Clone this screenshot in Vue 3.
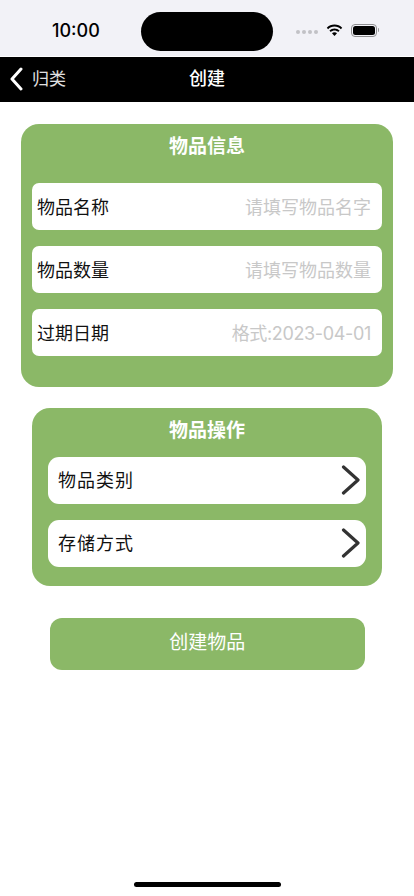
<script setup>
const fields = [
  { label: '物品名称', hint: '请填写物品名字' },
  { label: '物品数量', hint: '请填写物品数量' },
  { label: '过期日期', hint: '格式:2023-04-01', tight: true },
]
const ops = ['物品类别', '存储方式']
</script>

<template>
  <div class="page">
    <div class="status">
      <span class="time">10:00</span>
      <div class="island"></div>
      <div class="status-right">
        <div class="dots"><i></i><i></i><i></i><i></i></div>
        <svg class="wifi" width="17" height="13" viewBox="0 0 17 13">
          <path d="M8.5 2.6c2.5 0 4.7 1 6.4 2.6l1.3-1.4C14.2 1.8 11.5.6 8.5.6S2.8 1.8.8 3.8l1.3 1.4C3.8 3.6 6 2.6 8.5 2.6z" fill="#000"/>
          <path d="M8.5 6.4c1.4 0 2.7.5 3.7 1.5l1.4-1.4C12.2 5.200 10.400 4.400 8.500 4.400S4.800 5.200 3.400 6.500l1.400 1.400c1-1 2.300-1.500 3.700-1.500z" fill="#000"/>
          <path d="M8.500 8.300c-1 0-1.900.4-2.500 1l2.500 2.700 2.500-2.700c-.6-.6-1.500-1-2.500-1z" fill="#000"/>
        </svg>
        <div class="battery"><div class="battery-fill"></div></div>
        <div class="battery-cap"></div>
      </div>
    </div>

    <div class="nav">
      <div class="back">
        <svg width="14" height="24" viewBox="0 0 14 24">
          <path d="M12 2 L3 12 L12 22" fill="none" stroke="#fff" stroke-width="3" stroke-linecap="round" stroke-linejoin="round"/>
        </svg>
        <span>归类</span>
      </div>
      <div class="nav-title">创建</div>
    </div>

    <section class="card info">
      <h2 class="card-title">物品信息</h2>
      <div class="fields">
        <div v-for="f in fields" :key="f.label" class="field">
          <span class="label">{{ f.label }}</span>
          <span class="hint" :class="{ tight: f.tight }">{{ f.hint }}</span>
        </div>
      </div>
    </section>

    <section class="card ops">
      <h2 class="card-title">物品操作</h2>
      <div class="op-list">
        <div v-for="o in ops" :key="o" class="op">
          <span class="op-label">{{ o }}</span>
          <svg width="20" height="30" viewBox="0 0 20 30">
            <path d="M2.500 2 L17 15 L2.500 28" fill="none" stroke="#333" stroke-width="3.200" stroke-linecap="round" stroke-linejoin="round"/>
          </svg>
        </div>
      </div>
    </section>

    <button class="create">创建物品</button>

    <div class="spacer"></div>
    <div class="home"></div>
  </div>
</template>

<style scoped>
.page {
  width: 414px;
  height: 896px;
  background: #fff;
  display: flex;
  flex-direction: column;
  overflow: hidden;
  font-family: Inter, "Noto Sans CJK SC", sans-serif;
}
.status {
  height: 56px;
  flex: none;
  background: #f2f2f7;
  position: relative;
  display: flex;
  align-items: center;
  box-sizing: border-box;
  padding: 5px 0 0 52px;
  justify-content: space-between;
}
.time {
  font-family: Inter, sans-serif;
  font-size: 18px;
  font-weight: 500;
  color: #000;
}
.island {
  position: absolute;
  left: 141px;
  top: 12px;
  width: 132px;
  height: 39px;
  border-radius: 20px;
  background: #000;
}
.status-right {
  display: flex;
  align-items: center;
  padding-right: 35px;
  margin-top: -1px;
}
.dots {
  display: flex;
  gap: 2px;
  margin-right: 8px;
  margin-top: 3px;
}
.dots i {
  width: 4px;
  height: 4px;
  border-radius: 50%;
  background: #c2c2c6;
}
.wifi {
  margin-right: 8px;
}
.battery {
  width: 26px;
  height: 13px;
  box-sizing: border-box;
  border: 1px solid #8e8e90;
  border-radius: 4px;
  padding: 1px;
}
.battery-fill {
  width: 100%;
  height: 100%;
  background: #000;
  border-radius: 2.500px;
}
.battery-cap {
  width: 1.500px;
  height: 4px;
  background: #9a9a9c;
  margin-left: 1px;
  border-radius: 0 1px 1px 0;
}
.nav {
  height: 45px;
  flex: none;
  margin-top: 1px;
  padding-bottom: 2px;
  box-sizing: border-box;
  background: #000;
  color: #fff;
  position: relative;
  display: flex;
  align-items: center;
  justify-content: center;
}
.back {
  position: absolute;
  left: 9px;
  top: 10px;
  display: flex;
  align-items: center;
  gap: 9px;
  font-size: 17px;
  line-height: 24px;
  color: #e0e0e0;
}
.nav-title {
  font-size: 18px;
  font-weight: 500;
  line-height: 24px;
}
.card {
  background: #8bb867;
  border-radius: 18px;
  box-sizing: border-box;
  flex: none;
}
.card-title {
  margin: 0;
  color: #fff;
  font-size: 19px;
  line-height: 28px;
  font-weight: 700;
  text-align: center;
}
.info {
  margin: 22px 21px 0;
  width: 372px;
  height: 262.700px;
  padding: 9px 11px 0;
}
.fields {
  margin-top: 22.300px;
  display: flex;
  flex-direction: column;
  gap: 15.800px;
}
.field {
  height: 47.200px;
  box-sizing: border-box;
  background: #fff;
  border-radius: 7px;
  padding: 0 11px 0 5px;
  display: flex;
  align-items: center;
  justify-content: space-between;
}
.label {
  font-size: 18px;
  line-height: 24px;
  margin-top: 2px;
  color: #111;
}
.op-label {
  font-size: 18px;
  line-height: 24px;
  margin-top: 2px;
  color: #111;
  letter-spacing: 1px;
}
.hint {
  font-size: 18px;
  line-height: 24px;
  margin-top: 2px;
  color: #c8c8c8;
}
.tight {
  letter-spacing: -0.350px;
}
.ops {
  margin: 21px 32px 0;
  width: 350px;
  height: 178.300px;
  padding: 9px 16px 0;
}
.op-list {
  margin-top: 12px;
  display: flex;
  flex-direction: column;
  gap: 16px;
}
.op {
  height: 47.200px;
  background: #fff;
  border-radius: 11px;
  padding: 0 5px 0 10px;
  display: flex;
  align-items: center;
  justify-content: space-between;
}
.create {
  flex: none;
  margin: 32px 49px 0 49.500px;
  width: 315.500px;
  height: 52px;
  border: none;
  border-radius: 12px;
  background: #8bb867;
  color: #fff;
  font-family: inherit;
  font-size: 19px;
  line-height: 24px;
  padding: 0 0 2px;
}
.spacer {
  flex: 1;
}
.home {
  flex: none;
  width: 147px;
  height: 5px;
  background: #000;
  border-radius: 3px;
  margin: 0 auto 9px;
}
</style>
